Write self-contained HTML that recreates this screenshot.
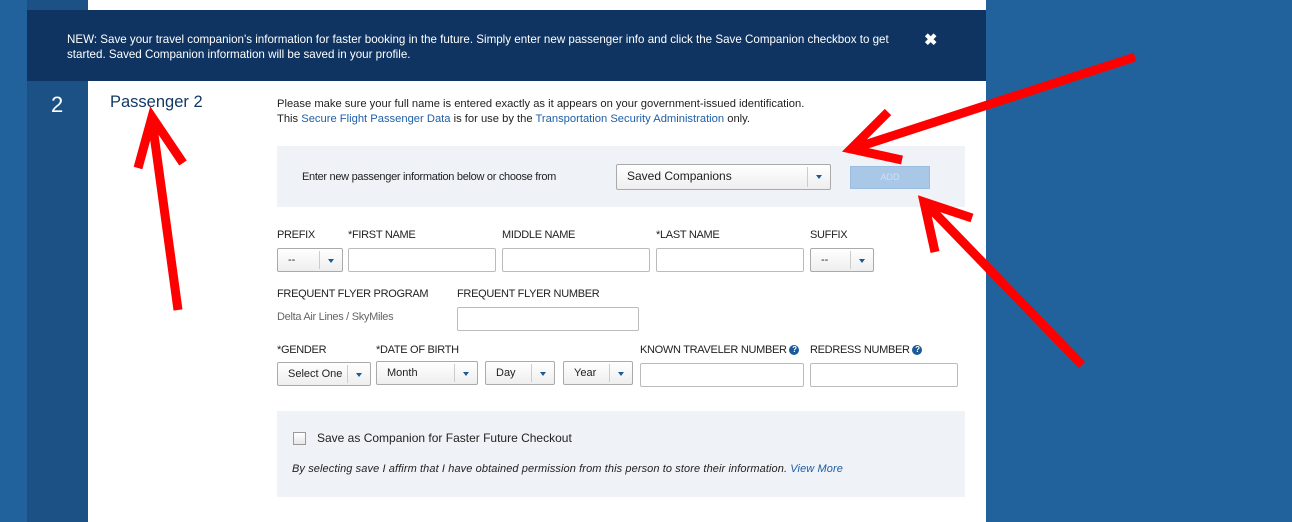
<!DOCTYPE html>
<html><head><meta charset="utf-8"><style>
*{margin:0;padding:0;box-sizing:border-box}
body{width:1292px;height:522px;overflow:hidden;background:#22629c;font-family:"Liberation Sans",sans-serif;position:relative;color:#222}
.a{position:absolute}
.lab{position:absolute;font-size:11px;color:#222;letter-spacing:-0.3px}
.in{position:absolute;height:24px;border:1px solid #bbb;background:#fff;border-radius:2px}
.sel{position:absolute;height:24px;border:1px solid #aaa;border-radius:2px;background:linear-gradient(#fff,#eee);font-size:11px;line-height:22px;padding-left:10px}
.sel:after{content:"";position:absolute;right:0;top:2px;bottom:2px;width:22px;border-left:1px solid #ccc}
.sel b{position:absolute;right:8px;top:10px;border-left:3px solid transparent;border-right:3px solid transparent;border-top:4px solid #1b5a9a}
.q{display:inline-block;width:10px;height:10px;border-radius:50%;background:#1b5a9a;color:#fff;font-size:8px;line-height:10px;text-align:center;font-weight:bold;vertical-align:1px}
a{color:#1f5fa8;text-decoration:none}
</style></head><body>
<div class="a" style="left:27px;top:0;width:61px;height:522px;background:#1c5185"></div>
<div class="a" style="left:88px;top:0;width:898px;height:522px;background:#fff"></div>
<div class="a" style="left:27px;top:10px;width:959px;height:71px;background:#0f3461"></div>
<div class="a" style="left:67px;top:32px;width:840px;font-size:11.6px;line-height:15px;color:#fff">NEW: Save your travel companion's information for faster booking in the future. Simply enter new passenger info and click the Save Companion checkbox to get started. Saved Companion information will be saved in your profile.</div>
<div class="a" style="left:924px;top:30px;color:#fff;font-size:16px;font-weight:bold">✖</div>
<div class="a" style="left:51px;top:92px;color:#fff;font-size:22px">2</div>
<div class="a" style="left:110px;top:93px;color:#123a66;font-size:16.5px">Passenger 2</div>
<div class="a" style="left:277px;top:97px;font-size:11.2px;line-height:15px">Please make sure your full name is entered exactly as it appears on your government-issued identification.<br>This <a>Secure Flight Passenger Data</a> is for use by the <a>Transportation Security Administration</a> only.</div>
<div class="a" style="left:277px;top:146px;width:688px;height:61px;background:#eff2f7"></div>
<div class="lab" style="left:302px;top:171px">Enter new passenger information below or choose from</div>
<div class="sel" style="left:616px;top:164px;width:215px;height:26px;font-size:12px;line-height:22px"><b></b>Saved Companions</div>
<div class="a" style="left:850px;top:166px;width:80px;height:23px;background:#a9c8e8;border:1px solid #9bbde0;color:#cfe0f2;font-size:9px;text-align:center;line-height:21px">ADD</div>
<div class="lab" style="left:277px;top:229px">PREFIX</div>
<div class="lab" style="left:348px;top:229px">*FIRST NAME</div>
<div class="lab" style="left:502px;top:229px">MIDDLE NAME</div>
<div class="lab" style="left:656px;top:229px">*LAST NAME</div>
<div class="lab" style="left:810px;top:229px">SUFFIX</div>
<div class="sel" style="left:277px;top:248px;width:66px"><b></b>--</div>
<div class="in" style="left:348px;top:248px;width:148px"></div>
<div class="in" style="left:502px;top:248px;width:148px"></div>
<div class="in" style="left:656px;top:248px;width:148px"></div>
<div class="sel" style="left:810px;top:248px;width:64px"><b></b>--</div>
<div class="lab" style="left:277px;top:288px">FREQUENT FLYER PROGRAM</div>
<div class="lab" style="left:457px;top:288px">FREQUENT FLYER NUMBER</div>
<div class="lab" style="left:277px;top:311px;color:#666">Delta Air Lines / SkyMiles</div>
<div class="in" style="left:457px;top:307px;width:182px"></div>
<div class="lab" style="left:277px;top:344px">*GENDER</div>
<div class="lab" style="left:376px;top:344px">*DATE OF BIRTH</div>
<div class="lab" style="left:640px;top:344px">KNOWN TRAVELER NUMBER <span class="q">?</span></div>
<div class="lab" style="left:810px;top:344px">REDRESS NUMBER <span class="q">?</span></div>
<div class="sel" style="left:277px;top:362px;width:94px"><b></b>Select One</div>
<div class="sel" style="left:376px;top:361px;width:102px"><b></b>Month</div>
<div class="sel" style="left:485px;top:361px;width:70px"><b></b>Day</div>
<div class="sel" style="left:563px;top:361px;width:70px"><b></b>Year</div>
<div class="in" style="left:640px;top:363px;width:164px"></div>
<div class="in" style="left:810px;top:363px;width:148px"></div>
<div class="a" style="left:277px;top:411px;width:688px;height:86px;background:#eff2f7"></div>
<div class="a" style="left:293px;top:432px;width:13px;height:13px;border:1px solid #999;background:linear-gradient(#fff,#e6e6e6)"></div>
<div class="a" style="left:317px;top:431px;font-size:12px">Save as Companion for Faster Future Checkout</div>
<div class="a" style="left:292px;top:463px;font-size:11px;font-style:italic;letter-spacing:0.1px">By selecting save I affirm that I have obtained permission from this person to store their information. <a>View More</a></div>
<svg class="a" style="left:0;top:0" width="1292" height="522" fill="none" stroke="#f00" stroke-width="9" stroke-linecap="butt">
<path d="M178 310 L152 120 M138 168 L152 117 L183 163"/>
<path d="M1135 57 L855 148 M888 112 L851 149 L902 160"/>
<path d="M1082 365 L928 206 M935 252 L924 202 L972 218"/>
</svg>
</body></html>
